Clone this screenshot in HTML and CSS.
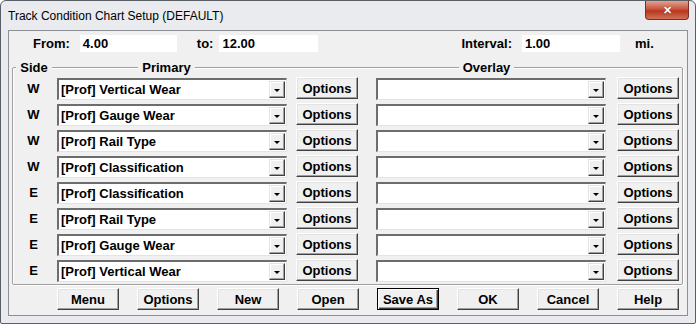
FILE: index.html
```html
<!DOCTYPE html>
<html lang="en">
<head>
  <meta charset="UTF-8">
  <link rel="stylesheet" href="styles.css">
  <title>Track Condition Chart Setup</title>
</head>
<body>

<div class="window">
  <div class="titlebar">
    <span class="title">Track Condition Chart Setup (DEFAULT)</span>
    <div class="close-btn">&#x2715;</div>
  </div>

  <div class="client">
    <div class="range-row">
      <span class="lbl lbl-from">From:</span>
      <span class="field field-from">4.00</span>
      <span class="lbl lbl-to">to:</span>
      <span class="field field-to">12.00</span>
      <span class="lbl lbl-interval">Interval:</span>
      <span class="field field-interval">1.00</span>
      <span class="lbl lbl-mi">mi.</span>
    </div>

    <div class="group">
      <div class="group-head">
        <span class="legend">Side</span>
        <span class="legend">Primary</span>
        <span></span>
        <span class="legend">Overlay</span>
      </div>
      <div class="rows" id="rows"></div>
    </div>

    <div class="button-row">
      <button class="btn">Menu</button>
      <button class="btn">Options</button>
      <button class="btn">New</button>
      <button class="btn">Open</button>
      <button class="btn btn-default">Save As</button>
      <button class="btn">OK</button>
      <button class="btn">Cancel</button>
      <button class="btn">Help</button>
    </div>
  </div>
</div>

<script>
  const rows = document.getElementById('rows');
  const channels = [
    ['W', '[Prof] Vertical Wear'],
    ['W', '[Prof] Gauge Wear'],
    ['W', '[Prof] Rail Type'],
    ['W', '[Prof] Classification'],
    ['E', '[Prof] Classification'],
    ['E', '[Prof] Rail Type'],
    ['E', '[Prof] Gauge Wear'],
    ['E', '[Prof] Vertical Wear']
  ];

  function combo(text, extra) {
    return '<div class="combo ' + extra + '"><span class="combo-text">' + text + '</span>' +
      '<span class="combo-arrow"><span class="tri"></span></span></div>';
  }

  // Build one row per channel
  channels.forEach(([side, name]) => {
    rows.insertAdjacentHTML('beforeend',
      '<div class="row">' +
      '<span class="side">' + side + '</span>' +
      combo(name, 'combo-primary') +
      '<button class="btn btn-primary-opt">Options</button>' +
      combo('', 'combo-overlay') +
      '<button class="btn btn-overlay-opt">Options</button>' +
      '</div>');
  });
</script>

</body>
</html>
```

FILE: styles.css
```css
body {
  margin: 0;
  background: #ffffff;
  font-family: 'Liberation Sans', Arial, sans-serif;
}

.window {
  width: 696px;
  height: 324px;
  box-sizing: border-box;
  background: #e9ebee;
  border: 1px solid #5a5f66;
  border-radius: 6px 6px 2px 2px;
  display: flex;
  flex-direction: column;
}

.titlebar {
  height: 29px;
  display: flex;
  align-items: center;
  justify-content: space-between;
  padding-left: 7px;
}

.title {
  font-size: 12px;
  color: #000;
  margin-top: 1px;
}

.close-btn {
  align-self: flex-start;
  width: 44px;
  height: 19px;
  margin-right: 6px;
  box-sizing: border-box;
  border: 1px solid #7a3026;
  border-top: none;
  border-radius: 0 0 4px 4px;
  background: linear-gradient(#e3a18f, #c9553d 45%, #b8361e 55%, #d07156);
  color: #fff;
  font-size: 11px;
  font-weight: bold;
  text-align: center;
  line-height: 18px;
  text-shadow: 0 0 1px #5a1b10;
}

.client {
  margin: 0 7px;
  height: 286px;
  box-sizing: border-box;
  border: 1px solid #8c8f94;
  background: #f0f0f0;
  font-size: 13px;
  font-weight: bold;
  color: #000;
}

.range-row {
  height: 36px;
  display: flex;
  align-items: flex-start;
  padding-top: 4px;
  box-sizing: border-box;
}

.lbl {
  line-height: 17px;
}

.field {
  background: #fff;
  height: 17px;
  line-height: 17px;
  padding-left: 3px;
  box-sizing: border-box;
}

.lbl-from { margin-left: 24px; }
.field-from { margin-left: 10px; width: 97px; }
.lbl-to { margin-left: 20px; }
.field-to { margin-left: 6px; width: 99px; }
.lbl-interval { margin-left: 143px; }
.field-interval { margin-left: 10px; width: 98px; }
.lbl-mi { margin-left: 15px; }

.group {
  margin: 0 4px 0 3px;
  height: 218px;
  box-sizing: border-box;
  border: 1px solid #a0a0a0;
  box-shadow: inset 1px 1px 0 #fff, 1px 1px 0 #fff;
  border-radius: 2px;
}

.group-head {
  height: 18px;
  margin-top: -8px;
  display: grid;
  grid-template-columns: 42px 223px 95px 227px;
  align-items: start;
  line-height: 15px;
}

.legend {
  justify-self: center;
  background: #f0f0f0;
  padding: 0 4px;
  height: 15px;
}

.rows {
  display: flex;
  flex-direction: column;
  gap: 4px;
}

.row {
  display: flex;
  align-items: flex-start;
  height: 22px;
}

.side {
  width: 44px;
  text-align: center;
  line-height: 22px;
  padding-right: 3px;
  box-sizing: border-box;
}

.combo {
  box-sizing: border-box;
  width: 230px;
  height: 22px;
  background: #fff;
  border-top: 2px solid #6d6d6d;
  border-left: 2px solid #6d6d6d;
  border-right: 1px solid #e3e3e3;
  border-bottom: 1px solid #e3e3e3;
  display: flex;
  align-items: center;
  justify-content: space-between;
}

.btn-primary-opt { margin-left: 9px; }
.combo-overlay { margin-left: 18px; }
.btn-overlay-opt { margin-left: 11px; }

.row .btn {
  margin-top: -1px;
}

.combo-text {
  padding-left: 2px;
  white-space: nowrap;
}

.combo-arrow {
  width: 16px;
  height: 17px;
  margin-right: 1px;
  box-sizing: border-box;
  background: #f0f0f0;
  border-top: 1px solid #e3e3e3;
  border-left: 1px solid #e3e3e3;
  border-right: 1px solid #404040;
  border-bottom: 1px solid #404040;
  box-shadow: inset -1px -1px 0 #a0a0a0, inset 1px 1px 0 #fff;
  display: flex;
  align-items: center;
  justify-content: center;
}

.tri {
  width: 0;
  height: 0;
  border-left: 3px solid transparent;
  border-right: 3px solid transparent;
  border-top: 3px solid #000;
  margin-top: 2px;
}

.btn {
  width: 62px;
  height: 22px;
  box-sizing: border-box;
  padding: 0;
  font-family: 'Liberation Sans', Arial, sans-serif;
  font-size: 13px;
  font-weight: bold;
  color: #000;
  background: #f0f0f0;
  border-top: 1px solid #fff;
  border-left: 1px solid #fff;
  border-right: 1px solid #404040;
  border-bottom: 1px solid #404040;
  box-shadow: inset -1px -1px 0 #a0a0a0, inset 1px 1px 0 #e3e3e3;
  border-radius: 0;
}

.btn-default {
  border: 1px solid #000;
  box-shadow: inset 1px 1px 0 #fff, inset -1px -1px 0 #404040, inset -2px -2px 0 #a0a0a0;
}

.button-row {
  display: flex;
  gap: 18px;
  padding-left: 48px;
  margin-top: 3px;
}
```
